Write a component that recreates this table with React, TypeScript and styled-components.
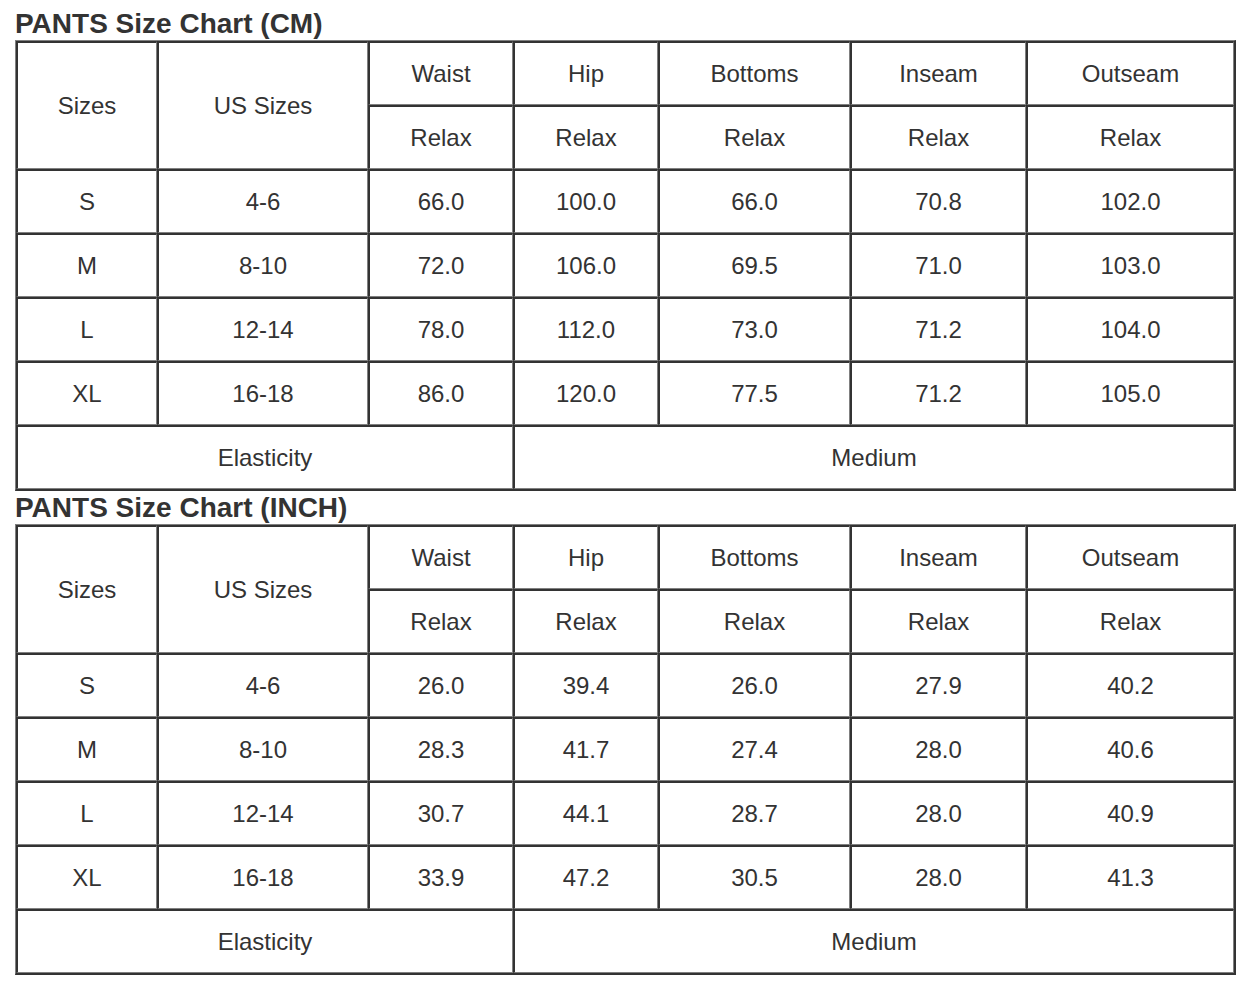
import React from "react";
import styled, { createGlobalStyle } from "styled-components";

const GlobalStyle = createGlobalStyle`
    html, body {
        margin: 0;
        padding: 0;
        background: #ffffff;
    }
    body {
        font-family: "Liberation Sans", Arial, sans-serif;
        color: #333333;
    }
`;

const LIGHT = "#808080";
const DARK = "#333333";

type ChartTypes = {
    title: string;
    rows: string[][];
}

const measures = ["Waist", "Hip", "Bottoms", "Inseam", "Outseam"];

const cmRows = [
    ["S", "4-6", "66.0", "100.0", "66.0", "70.8", "102.0"],
    ["M", "8-10", "72.0", "106.0", "69.5", "71.0", "103.0"],
    ["L", "12-14", "78.0", "112.0", "73.0", "71.2", "104.0"],
    ["XL", "16-18", "86.0", "120.0", "77.5", "71.2", "105.0"],
];

const inchRows = [
    ["S", "4-6", "26.0", "39.4", "26.0", "27.9", "40.2"],
    ["M", "8-10", "28.3", "41.7", "27.4", "28.0", "40.6"],
    ["L", "12-14", "30.7", "44.1", "28.7", "28.0", "40.9"],
    ["XL", "16-18", "33.9", "47.2", "30.5", "28.0", "41.3"],
];

const SizeChart = function(props: ChartTypes) {
    return (
        <section>
            <Title>{props.title}</Title>
            <Grid>
                <Cell $rows={2}>Sizes</Cell>
                <Cell $rows={2}>US Sizes</Cell>
                {measures.map(m => <Cell key={m}>{m}</Cell>)}
                {measures.map(m => <Cell key={m + "-fit"}>Relax</Cell>)}
                {props.rows.map(row => row.map((value, i) => <Cell key={row[0] + i}>{value}</Cell>))}
                <Cell $cols={3}>Elasticity</Cell>
                <Cell $cols={4}>Medium</Cell>
            </Grid>
        </section>
    )
}

export default function App() {
    return (
        <>
            <GlobalStyle />
            <Page>
                <SizeChart title="PANTS Size Chart (CM)" rows={cmRows} />
                <SizeChart title="PANTS Size Chart (INCH)" rows={inchRows} />
            </Page>
        </>
    )
}

const Page = styled.main`
    padding: 7px 0 0 15px;
`

const Title = styled.h2`
    margin: 0;
    height: 33px;
    line-height: 33px;
    font-size: 28px;
    font-weight: 700;
    color: #333333;
    white-space: nowrap;
`

const Grid = styled.div`
    display: grid;
    width: 1221px;
    box-sizing: border-box;
    grid-template-columns: 141px 211px 145px 145px 192px 176px 208px;
    grid-auto-rows: 64px;
    border-top: 1px solid ${LIGHT};
    border-left: 1px solid ${LIGHT};
    border-bottom: 2px solid ${DARK};
    border-right: 2px solid ${DARK};
`

const Cell = styled.div<{ $rows?: number; $cols?: number }>`
    grid-row: span ${p => p.$rows || 1};
    grid-column: span ${p => p.$cols || 1};
    box-sizing: border-box;
    display: flex;
    align-items: center;
    justify-content: center;
    border-top: 2px solid ${DARK};
    border-left: 2px solid ${DARK};
    border-bottom: 1px solid ${LIGHT};
    border-right: 1px solid ${LIGHT};
    font-size: 24px;
    color: #333333;
`
